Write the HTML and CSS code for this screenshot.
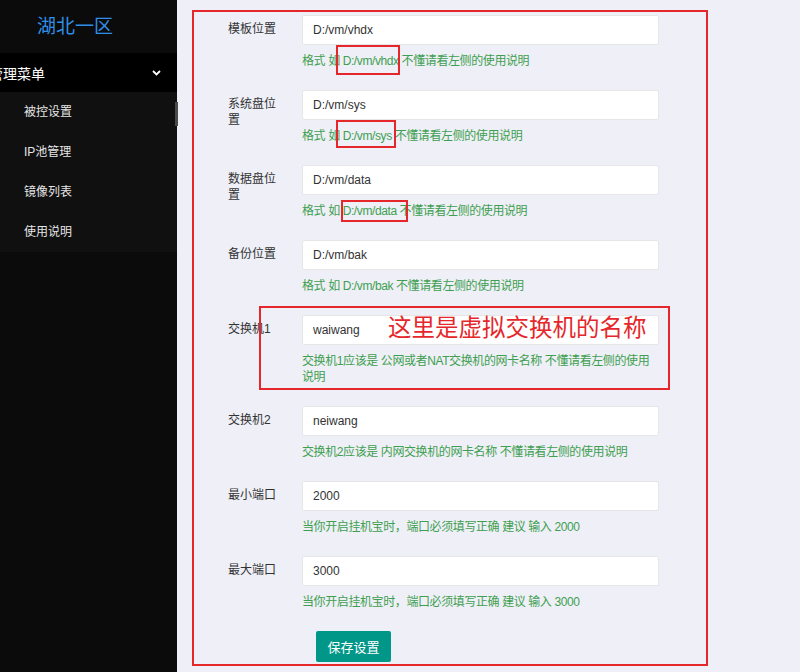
FILE: index.html
```html
<!DOCTYPE html>
<html lang="zh-CN">

<head>
    <meta charset="utf-8">
    <meta name="viewport" content="width=device-width, initial-scale=1.0">
    <title>湖北一区</title>
    <link rel="stylesheet" href="styles.css">
</head>

<body>
    <aside class="side">
        <div class="logo">湖北一区</div>
        <div class="menu-head">
            <span>管理菜单</span>
            <svg class="chev" width="9" height="6" viewBox="0 0 9 6"><path d="M1 1 L4.5 4.5 L8 1" fill="none" stroke="#fff" stroke-width="1.8"/></svg>
        </div>
        <div class="sub">
            <div class="sub-item">被控设置</div>
            <div class="sub-item">IP池管理</div>
            <div class="sub-item">镜像列表</div>
            <div class="sub-item">使用说明</div>
        </div>
        <div class="thumb"></div>
    </aside>

    <main class="content">
        <form class="panel">
            <div class="row">
                <label class="lbl">模板位置</label>
                <div class="fld">
                    <input class="inp" value="D:/vm/vhdx">
                    <div class="aux">格式 如 D:/vm/vhdx 不懂请看左侧的使用说明</div>
                    <div class="mark m1"></div>
                </div>
            </div>
            <div class="row">
                <label class="lbl">系统盘位置</label>
                <div class="fld">
                    <input class="inp" value="D:/vm/sys">
                    <div class="aux">格式 如 D:/vm/sys 不懂请看左侧的使用说明</div>
                    <div class="mark m2"></div>
                </div>
            </div>
            <div class="row">
                <label class="lbl">数据盘位置</label>
                <div class="fld">
                    <input class="inp" value="D:/vm/data">
                    <div class="aux">格式 如 D:/vm/data 不懂请看左侧的使用说明</div>
                    <div class="mark m3"></div>
                </div>
            </div>
            <div class="row">
                <label class="lbl">备份位置</label>
                <div class="fld">
                    <input class="inp" value="D:/vm/bak">
                    <div class="aux">格式 如 D:/vm/bak 不懂请看左侧的使用说明</div>
                </div>
            </div>
            <div class="row">
                <label class="lbl">交换机1</label>
                <div class="fld">
                    <input class="inp" value="waiwang">
                    <div class="aux nowrap">交换机1应该是 公网或者NAT交换机的网卡名称 不懂请看左侧的使用<br>说明</div>
                    <div class="mark m4"><span class="note">这里是虚拟交换机的名称</span></div>
                </div>
            </div>
            <div class="row">
                <label class="lbl">交换机2</label>
                <div class="fld">
                    <input class="inp" value="neiwang">
                    <div class="aux">交换机2应该是 内网交换机的网卡名称 不懂请看左侧的使用说明</div>
                </div>
            </div>
            <div class="row">
                <label class="lbl">最小端口</label>
                <div class="fld">
                    <input class="inp" value="2000">
                    <div class="aux">当你开启挂机宝时，端口必须填写正确 建议 输入 2000</div>
                </div>
            </div>
            <div class="row">
                <label class="lbl">最大端口</label>
                <div class="fld">
                    <input class="inp" value="3000">
                    <div class="aux">当你开启挂机宝时，端口必须填写正确 建议 输入 3000</div>
                </div>
            </div>
            <button class="btn" type="button">保存设置</button>
        </form>
    </main>
</body>

</html>
```

FILE: styles.css
```css
* {
    box-sizing: border-box;
}

body {
    margin: 0;
    height: 672px;
    overflow: hidden;
    display: flex;
    background: #eeeff7;
    font-family: "Liberation Sans", "Noto Sans CJK SC", sans-serif;
}

/* sidebar */
.side {
    width: 177px;
    flex-shrink: 0;
    background: #0b0b0b;
    position: relative;
}

.logo {
    height: 53px;
    line-height: 53px;
    padding-left: 37px;
    color: #2f8fe8;
    font-size: 19px;
}

.menu-head {
    height: 39px;
    background: #000;
    color: #fff;
    font-size: 14px;
    display: flex;
    align-items: center;
    justify-content: space-between;
    padding-right: 16px;
}

.menu-head span {
    margin-left: -11px;
}

.sub {
    background: #101010;
}

.sub-item {
    height: 40px;
    line-height: 40px;
    padding-left: 24px;
    font-size: 12px;
    color: #e6e6e6;
}

.thumb {
    position: absolute;
    left: 175px;
    top: 102px;
    width: 3px;
    height: 24px;
    background: #4a4a4a;
}

/* form */
.content {
    flex: 1;
    padding: 10px 0 0 15px;
}

.panel {
    width: 516px;
    height: 656px;
    border: 2px solid #e5272c;
    padding: 3px 0 0 34px;
}

.row {
    display: flex;
    margin-bottom: 21px;
}

.lbl {
    width: 50px;
    margin-right: 24px;
    padding-top: 6px;
    font-size: 12px;
    line-height: 16px;
    color: #333;
}

.fld {
    width: 357px;
    position: relative;
}

.inp {
    display: block;
    width: 100%;
    height: 30px;
    border: 1px solid #e6e6e6;
    border-radius: 2px;
    background: #fff;
    padding: 0 10px;
    font-family: "Liberation Sans", "Noto Sans CJK SC", sans-serif;
    font-size: 12px;
    color: #333;
}

.aux {
    margin-top: 8px;
    font-size: 12px;
    line-height: 16px;
    letter-spacing: -0.4px;
    color: #3f9f50;
}

.nowrap {
    white-space: nowrap;
}

.btn {
    margin-left: 88px;
    width: 75px;
    height: 31px;
    border: none;
    border-radius: 2px;
    background: #009688;
    color: #fff;
    font-family: "Liberation Sans", "Noto Sans CJK SC", sans-serif;
    font-size: 13px;
}

/* red annotations */
.mark {
    position: absolute;
    border: 2px solid #e5272c;
}

.m1 {
    left: 34px;
    top: 30px;
    width: 64px;
    height: 30px;
}

.m2 {
    left: 34px;
    top: 30px;
    width: 60px;
    height: 28px;
}

.m3 {
    left: 39px;
    top: 35px;
    width: 67px;
    height: 22px;
}

.m4 {
    left: -43px;
    top: -9px;
    width: 411px;
    height: 84px;
    padding: 6px 0 0 127px;
}

.note {
    display: block;
    font-size: 23.5px;
    line-height: 28px;
    color: #e5272c;
    white-space: nowrap;
}
```
